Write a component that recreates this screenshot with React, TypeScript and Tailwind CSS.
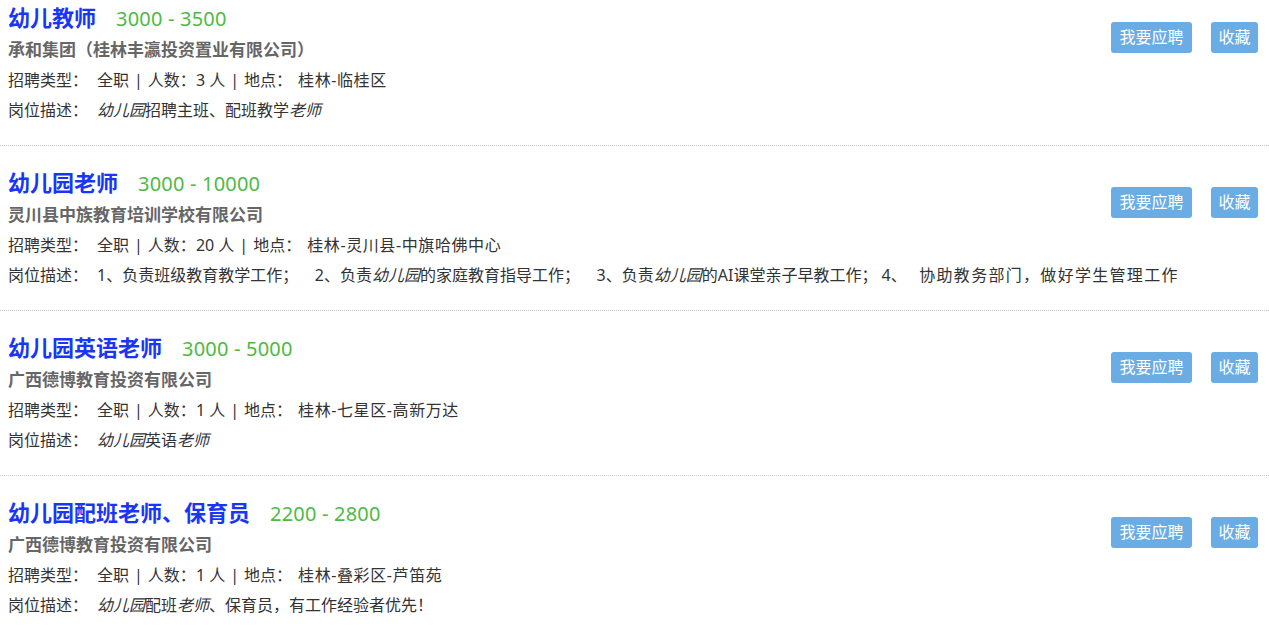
import React from "react";

type Seg = { t: string; i?: boolean; w?: boolean };
type Job = {
  title: string;
  salary: string;
  company: string;
  count: string;
  place: string;
  desc: Seg[];
};

const jobs: Job[] = [
  {
    title: "幼儿教师",
    salary: "3000 - 3500",
    company: "承和集团（桂林丰瀛投资置业有限公司）",
    count: "3",
    place: "桂林-临桂区",
    desc: [{ t: "幼儿园", i: true }, { t: "招聘主班、配班教学" }, { t: "老师", i: true }],
  },
  {
    title: "幼儿园老师",
    salary: "3000 - 10000",
    company: "灵川县中族教育培训学校有限公司",
    count: "20",
    place: "桂林-灵川县-中旗哈佛中心",
    desc: [
      { t: "1、负责班级教育教学工作；\u00a0\u00a0\u00a0\u00a02、负责" },
      { t: "幼儿园", i: true },
      { t: "的家庭教育指导工作；\u00a0\u00a0\u00a0\u00a03、负责" },
      { t: "幼儿园", i: true },
      { t: "的AI课堂亲子早教工作；\u00a04、\u00a0\u00a0\u00a0" },
      { t: "协助教务部门，做好学生管理工作", w: true },
    ],
  },
  {
    title: "幼儿园英语老师",
    salary: "3000 - 5000",
    company: "广西德博教育投资有限公司",
    count: "1",
    place: "桂林-七星区-高新万达",
    desc: [{ t: "幼儿园", i: true }, { t: "英语" }, { t: "老师", i: true }],
  },
  {
    title: "幼儿园配班老师、保育员",
    salary: "2200 - 2800",
    company: "广西德博教育投资有限公司",
    count: "1",
    place: "桂林-叠彩区-芦笛苑",
    desc: [
      { t: "幼儿园", i: true },
      { t: "配班" },
      { t: "老师", i: true },
      { t: "、保育员，有工作经验者优先！" },
    ],
  },
];

const font = {
  fontFamily: '"Noto Sans", "Noto Sans CJK SC", sans-serif',
};

function Item({ job, first }: { job: Job; first: boolean }) {
  return (
    <div
      className={`flex pt-[20px] pb-[20px] pl-[8px] pr-[11px] ${
        first ? "" : "border-t border-dotted border-[#c8c8c8]"
      }`}
    >
      <div className="flex-1 min-w-0">
        <div className="flex items-baseline h-[34px] leading-[32px]">
          <span className="text-[22px] font-bold text-[#1a35fa]">{job.title}</span>
          <span className="ml-[20px] text-[20px] text-[#4dba45] tracking-[0.2px]">
            {job.salary}
          </span>
        </div>
        <div className="h-[30px] leading-[30px] text-[17px] font-bold text-[#666]">
          {job.company}
        </div>
        <div className="h-[30px] leading-[30px] text-[16px] text-[#333] whitespace-nowrap">
          招聘类型：
          <span className="ml-[9px]">
            全职<span className="mx-[5px]">|</span>人数：{job.count} 人<span className="mx-[5px]">|</span>地点：
          </span>
          <span className="ml-[6px] tracking-[0.6px]">{job.place}</span>
        </div>
        <div className="h-[30px] leading-[30px] text-[16px] text-[#333] whitespace-nowrap">
          岗位描述：
          <span className="ml-[9px]">
            {job.desc.map((s, k) =>
              s.i ? (
                <em key={k} className="italic">
                  {s.t}
                </em>
              ) : (
                <span key={k} className={s.w ? "tracking-[1.3px]" : ""}>
                  {s.t}
                </span>
              )
            )}
          </span>
        </div>
      </div>
      <div className="flex items-start gap-[19px] pt-[21px]">
        <button className="w-[81px] h-[31px] rounded-[3px] bg-[#6aade4] text-white text-[16px] leading-[31px]">
          我要应聘
        </button>
        <button className="w-[47px] h-[31px] rounded-[3px] bg-[#6aade4] text-white text-[16px] leading-[31px]">
          收藏
        </button>
      </div>
    </div>
  );
}

export default function App() {
  return (
    <div className="w-[1269px] h-[638px] overflow-hidden bg-white" style={font}>
      <div className="-mt-[19px]">
        {jobs.map((j, k) => (
          <Item key={k} job={j} first={k === 0} />
        ))}
      </div>
    </div>
  );
}
